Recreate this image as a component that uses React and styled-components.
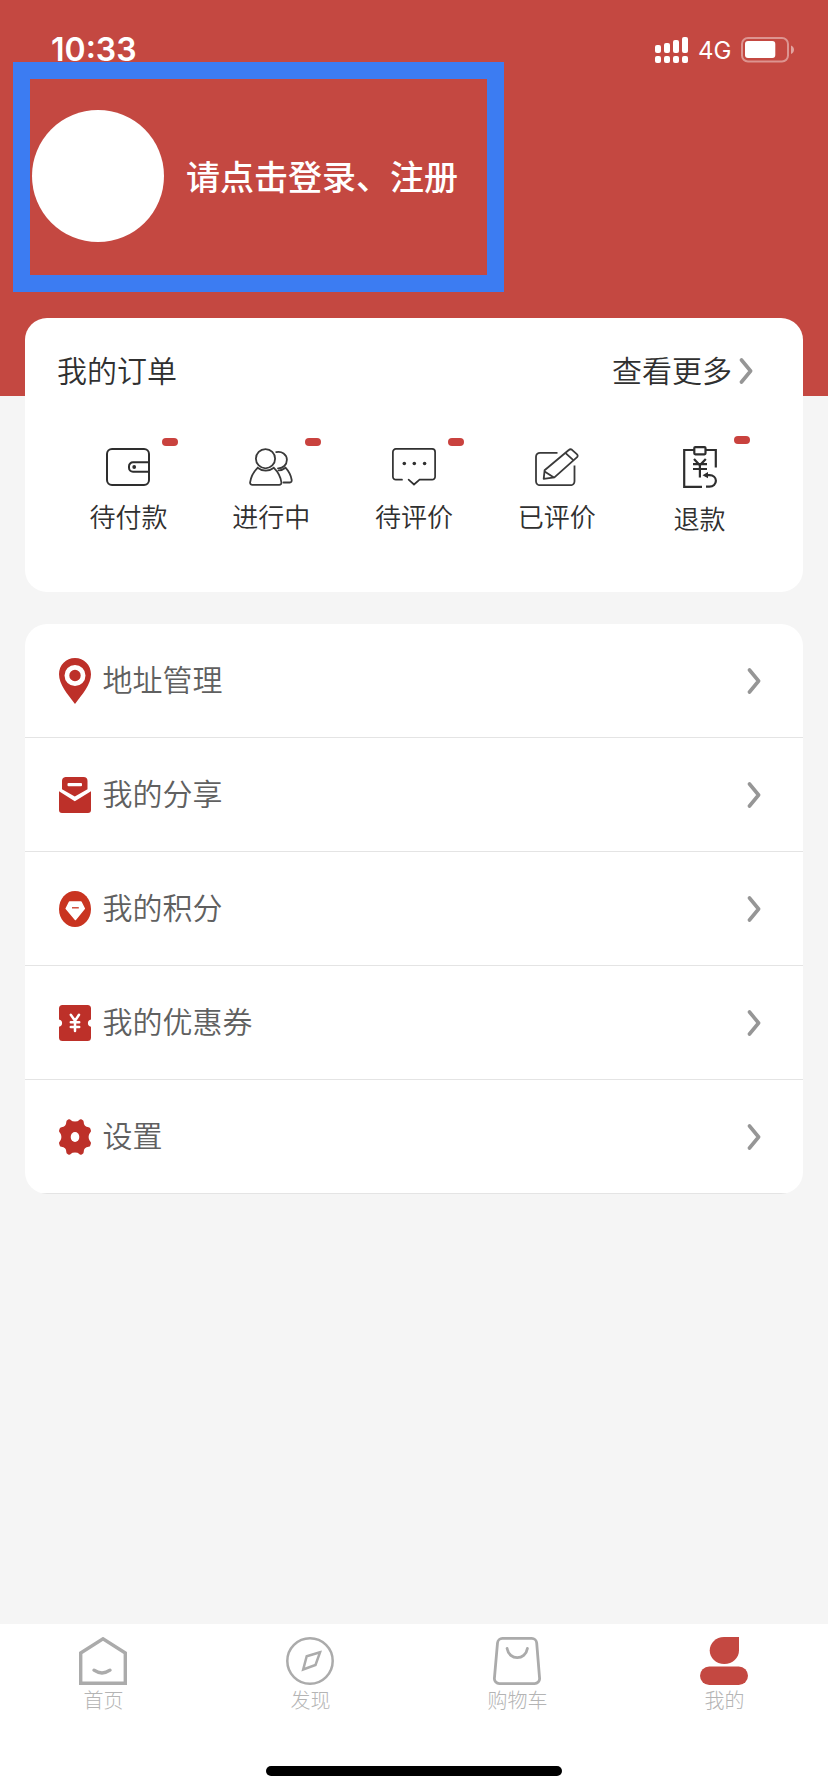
import React, { useState } from "react";
import styled, { createGlobalStyle } from "styled-components";

const WalletIcon = () => (
  <svg width="44" height="38" viewBox="0 0 44 38" fill="none" stroke="#2e2e2e" strokeWidth="2">
    <rect x="1" y="1" width="42" height="36" rx="5" />
    <path d="M43 14.3H27a4 4 0 0 0-4 4v1.400a4 4 0 0 0 4 4H43" />
    <circle cx="28.2" cy="19" r="1.9" fill="#2e2e2e" stroke="none" />
  </svg>
);

const PeopleIcon = () => (
  <svg width="44" height="38" viewBox="0 0 44 38" fill="none" stroke="#3a3a3a" strokeWidth="1.8" strokeLinecap="round">
    <circle cx="16.5" cy="10.7" r="9.6" />
    <path d="M8.6 19.8C4.300 24 1.800 29.500 1.100 34.300c-.2 1.500.8 2.500 2.300 2.500h26.800c1.500 0 2.400-1 2.200-2.500-.7-4.800-3.200-10.300-7.500-14.500-4.500 3.700-11.800 3.700-16.300 0z" />
    <path d="M27.200 4.100c5.500-1.300 10.700 2.300 10.700 7.700 0 5-4 8.700-8.900 8.500" />
    <path d="M29.500 22.300c2.600.3 4.700-.8 7-2.600 3.500 3.800 5.600 8.600 6.200 12.300.2 1.300-.5 2.500-1.800 2.500h-6.400" />
  </svg>
);

const CommentIcon = () => (
  <svg width="44" height="38" viewBox="0 0 44 38" fill="none" stroke="#303030" strokeWidth="1.7" strokeLinecap="round">
    <path d="M10 31.700H3.900a3 3 0 0 1-3-3V3.900a3 3 0 0 1 3-3h36.200a3 3 0 0 1 3 3v24.800a3 3 0 0 1-3 3H27.600L22 36.500l-5.400-4.800" />
    <g fill="#303030" stroke="none">
      <circle cx="12.300" cy="15.500" r="1.800" />
      <circle cx="22.300" cy="15.500" r="1.800" />
      <circle cx="32.600" cy="15.500" r="1.800" />
    </g>
  </svg>
);

const EditIcon = () => (
  <svg width="44" height="38" viewBox="0 0 44 38" fill="none" stroke="#3a3a3a" strokeWidth="1.800" strokeLinejoin="round">
    <path d="M22.500 4.800H5a4 4 0 0 0-4 4v24.400a4 4 0 0 0 4 4h30.500a4 4 0 0 0 4-4V17.500" />
    <path d="M9.600 22.300L33.800 2c1-.9 2.200-1 3.200-.2l4.800 4.300c1 .9 1.200 2 .3 3L19.400 29.400l-10.700 1.400z" />
    <path d="M30.600 5.200l7.700 7M9.600 23.500l9.300 6.100" />
  </svg>
);

const RefundIcon = () => (
  <svg width="34" height="42" viewBox="0 0 34 42" fill="none" stroke="#2e2e2e" strokeWidth="2.200">
    <path d="M11 4H1.200v36.800H19M22.500 4h10.300v17.500" />
    <rect x="11.300" y="1.100" width="11.200" height="7.200" rx="1" />
    <path d="M11 13l5.800 6.300L22.800 13M10 18.200h14M10 23h14M16.900 18.500v13" />
    <path d="M23 40.700h3.500c3.700 0 6.400-2.600 6.400-5.900s-2.700-5.700-6.400-5.700H22" />
    <path d="M25 25.900l-5.500 3.400L25 32.300z" fill="#2e2e2e" stroke="none" />
  </svg>
);

const PinIcon = () => (
  <svg width="32" height="46" viewBox="0 0 32 46" fill="none">
    <path d="M16 0C7 0 0 7.200 0 16.200 0 26.500 8.500 36 16 46c7.500-10 16-19.500 16-29.800C32 7.200 25 0 16 0z" fill="#bd3029" />
    <circle cx="16" cy="17.500" r="8.100" stroke="#fff" strokeWidth="4.800" />
  </svg>
);

const MailIcon = () => (
  <svg width="32" height="36" viewBox="0 0 32 36" fill="#bd3029">
    <path d="M6.500 0h18A4 4 0 0 1 28.500 4v8.300L15.800 19.500 3 12.300V4A4 4 0 0 1 6.500 0z" />
    <path d="M0 14.300l15.800 10L32 14.300V33a3 3 0 0 1-3 3H3a3 3 0 0 1-3-3z" />
    <rect x="8.500" y="6" width="14.500" height="3.200" rx="1" fill="#fff" />
  </svg>
);

const DiamondIcon = () => (
  <svg width="32" height="36" viewBox="0 0 32 36">
    <ellipse cx="16" cy="18" rx="16" ry="18" fill="#c93420" />
    <path d="M10.500 11h11.500L25.300 17.500 16.400 28.500 7.200 17.500z" fill="#fff" stroke="#fff" strokeWidth="1.500" strokeLinejoin="round" />
    <path d="M13 16.800h6.800" stroke="#c93420" strokeWidth="1.300" />
  </svg>
);

const CouponIcon = () => (
  <svg width="32" height="36" viewBox="0 0 32 36">
    <path
      d="M3.500 0h25A3.500 3.500 0 0 1 32 3.500V14.400a3.700 3.700 0 0 0 0 7.300V32.500a3.500 3.500 0 0 1-3.500 3.500h-25A3.500 3.500 0 0 1 0 32.500V21.700a3.700 3.700 0 0 0 0-7.300V3.500A3.500 3.500 0 0 1 3.500 0z"
      fill="#bd3029"
    />
    <path
      d="M11.800 9.800l4.200 6 4-6M11.800 17.300h8.400M11.800 21.900h8.400M16 16.500V26"
      fill="none"
      stroke="#fff"
      strokeWidth="2.500"
      strokeLinecap="round"
    />
  </svg>
);

const GearIcon = () => (
  <svg width="32" height="36" viewBox="0 0 32 36">
    <path
      d="M9.700.3Q11 0 12 1.200 13 2.600 16 2.600T20 1.200Q21 0 22.300.3L23.500.9Q24.700 1.500 24.700 3 24.700 5.500 26 6.800T29.500 8.300Q31 8.300 31.400 9.800L31.900 11.500Q32.200 13 31 13.800 29.600 15.500 29.600 18T31 22.200Q32.200 23 31.900 24.500L31.400 26.200Q31 27.700 29.500 27.700 27.300 27.900 26 29.200T24.700 33Q24.700 34.500 23.500 35.100L22.300 35.700Q21 36 20 34.800 19 33.400 16 33.400T12 34.800Q11 36 9.700 35.700L8.500 35.100Q7.300 34.500 7.300 33 7.300 30.500 6 29.200T2.500 27.700Q1 27.700.6 26.200L.1 24.500Q-.2 23 1 22.200 2.400 20.500 2.400 18T1 13.800Q-.2 13 .1 11.500L.6 9.800Q1 8.300 2.500 8.300 4.700 8.100 6 6.800T7.300 3Q7.300 1.500 8.500.9z"
      fill="#bd3029"
    />
    <ellipse cx="16" cy="18" rx="4.300" ry="5" fill="#fff" />
  </svg>
);

const ArrowIcon = () => (
  <svg width="14" height="28" viewBox="0 0 14 28" fill="none" stroke="#969696" strokeWidth="3.600" strokeLinecap="round" strokeLinejoin="round">
    <path d="M2.500 3L11.600 14 2.500 25" />
  </svg>
);

const HomeIcon = () => (
  <svg width="48" height="48" viewBox="0 0 48 48" fill="none" stroke="#ababab" strokeWidth="3.400">
    <path d="M1.700 46.300V16L24 1.800 46.300 16v30.300z" />
    <path d="M15 33.200c5 3.400 11 3.400 16 0" strokeLinecap="round" />
  </svg>
);

const CompassIcon = () => (
  <svg width="48" height="48" viewBox="0 0 48 48" fill="none" stroke="#ababab" strokeWidth="2.500">
    <circle cx="24" cy="24" r="22.700" />
    <path d="M34 15.300l-13.300 4-3.500 13.200 12.300-4.500z" />
  </svg>
);

const BagIcon = () => (
  <svg width="48" height="48" viewBox="0 0 48 48" fill="none" stroke="#ababab" strokeWidth="2.800">
    <path d="M9.500 1.400h29.200a5 5 0 0 1 5 4.600l2.900 35.300a5 5 0 0 1-5 5.300H6.400a5 5 0 0 1-5-5.300L4.500 6a5 5 0 0 1 5-4.600z" />
    <path d="M14.100 11.500c2 12.200 18.300 12.200 20.300 0" strokeLinecap="round" />
  </svg>
);

const MineIcon = () => (
  <svg width="48" height="48" viewBox="0 0 48 48" fill="#c44841">
    <path d="M24 0h15v13.500C39 21 32.500 27 24.300 27 16 27 9.700 21 9.700 13.500S16 0 24 0z" />
    <rect x="0" y="29.500" width="48" height="18.500" rx="9.250" />
  </svg>
);

const SignalIcon = () => (
  <svg width="33" height="26" viewBox="0 0 33 26" fill="#fff">
    <rect x="0" y="8" width="6" height="8" rx="2" />
    <rect x="9" y="6" width="6" height="10" rx="2" />
    <rect x="18" y="3" width="6" height="13" rx="2" />
    <rect x="27" y="0" width="6" height="16" rx="2" />
    <rect x="0" y="19" width="6" height="7" rx="2" />
    <rect x="9" y="19" width="6" height="7" rx="2" />
    <rect x="18" y="19" width="6" height="7" rx="2" />
    <rect x="27" y="19" width="6" height="7" rx="2" />
  </svg>
);

const BatteryIcon = () => (
  <svg width="54" height="26" viewBox="0 0 54 26">
    <rect x="1" y="1" width="46" height="23.500" rx="6" fill="none" stroke="#fff" strokeOpacity=".42" strokeWidth="2" />
    <rect x="4" y="4" width="30.300" height="17" rx="3" fill="#fff" />
    <path d="M50 8.500c2 .8 3 2.400 3 4.300s-1 3.500-3 4.300z" fill="#fff" fillOpacity=".5" />
  </svg>
);

const orderItems = [
  { id: 1, title: "待付款", icon: <WalletIcon />, badge: true },
  { id: 2, title: "进行中", icon: <PeopleIcon />, badge: true },
  { id: 3, title: "待评价", icon: <CommentIcon />, badge: true },
  { id: 4, title: "已评价", icon: <EditIcon />, badge: false },
  { id: 5, title: "退款", icon: <RefundIcon />, badge: true, tall: true },
];

const menuItems = [
  { id: 1, title: "地址管理", icon: <PinIcon /> },
  { id: 2, title: "我的分享", icon: <MailIcon /> },
  { id: 3, title: "我的积分", icon: <DiamondIcon /> },
  { id: 4, title: "我的优惠券", icon: <CouponIcon /> },
  { id: 5, title: "设置", icon: <GearIcon /> },
];

const tabItems = [
  { id: "home", title: "首页", icon: <HomeIcon /> },
  { id: "find", title: "发现", icon: <CompassIcon /> },
  { id: "cart", title: "购物车", icon: <BagIcon /> },
  { id: "mine", title: "我的", icon: <MineIcon /> },
];

const App = () => {
  const [, setActiveTab] = useState("mine");

  return (
    <>
      <GlobalStyle />
      <StyledScreen>
        <StyledHeader>
          <StyledStatusBar>
            <StyledTime>10:33</StyledTime>
            <StyledStatusIcons>
              <SignalIcon />
              <StyledNetwork>4G</StyledNetwork>
              <BatteryIcon />
            </StyledStatusIcons>
          </StyledStatusBar>
          <StyledProfile>
            <StyledAvatar />
            <StyledLogin>请点击登录、注册</StyledLogin>
          </StyledProfile>
          <StyledHighlight />
        </StyledHeader>

        <StyledOrders>
          <StyledOrdersHead>
            <StyledHeadText>我的订单</StyledHeadText>
            <StyledMore>
              <StyledHeadText>查看更多</StyledHeadText>
              <ArrowIcon />
            </StyledMore>
          </StyledOrdersHead>
          <StyledOrdersList>
            {orderItems.map((item) => (
              <StyledOrder key={item.id} $tall={item.tall}>
                {item.icon}
                <span>{item.title}</span>
                {item.badge && <StyledBadge $tall={item.tall} />}
              </StyledOrder>
            ))}
          </StyledOrdersList>
        </StyledOrders>

        <StyledMenu>
          {menuItems.map((item) => (
            <StyledMenuRow key={item.id}>
              {item.icon}
              <StyledMenuTitle>{item.title}</StyledMenuTitle>
              <ArrowIcon />
            </StyledMenuRow>
          ))}
        </StyledMenu>

        <StyledTabBar>
          <StyledTabs>
            {tabItems.map((tab) => (
              <StyledTab key={tab.id} onClick={() => setActiveTab(tab.id)}>
                {tab.icon}
                <span>{tab.title}</span>
              </StyledTab>
            ))}
          </StyledTabs>
          <StyledHomeIndicator />
        </StyledTabBar>
      </StyledScreen>
    </>
  );
};

const GlobalStyle = createGlobalStyle`
  * {
    box-sizing: border-box;
  }
  body {
    margin: 0;
    font-family: "Noto Sans CJK SC", sans-serif;
    font-weight: 350;
    background: #f5f5f5;
  }
  svg {
    display: block;
    flex-shrink: 0;
  }
`;
const StyledScreen = styled.div`
  width: 828px;
  height: 1792px;
  display: flex;
  flex-direction: column;
  background: #f5f5f5;
  overflow: hidden;
`;
const StyledHeader = styled.header`
  position: relative;
  flex-shrink: 0;
  height: 396px;
  background: #c44841;
  color: #fff;
`;
const StyledStatusBar = styled.div`
  height: 100px;
  padding: 0 33px 0 51px;
  display: flex;
  justify-content: space-between;
  font-family: Inter, sans-serif;
`;
const StyledTime = styled.span`
  padding-top: 30px;
  font-size: 32px;
  font-weight: 600;
  line-height: 40px;
`;
const StyledStatusIcons = styled.div`
  height: 26px;
  margin-top: 37px;
  display: flex;
  align-items: center;
`;
const StyledNetwork = styled.span`
  width: 53px;
  padding: 2px 0 0 10px;
  font-size: 24px;
  font-weight: 400;
  line-height: 26px;
`;
const StyledProfile = styled.div`
  padding: 10px 32px 0;
  display: flex;
  align-items: center;
  gap: 22px;
`;
const StyledAvatar = styled.div`
  width: 132px;
  height: 132px;
  border-radius: 50%;
  background: #fff;
`;
const StyledLogin = styled.span`
  font-size: 34px;
  font-weight: 500;
  line-height: 48px;
`;
const StyledHighlight = styled.div`
  position: absolute;
  left: 13px;
  top: 62px;
  width: 491px;
  height: 230px;
  border: 17px solid #3c7cf2;
`;
const StyledOrders = styled.section`
  position: relative;
  flex-shrink: 0;
  height: 274px;
  margin: -78px 25px 0;
  border-radius: 22px;
  background: #fff;
  color: #303030;
`;
const StyledOrdersHead = styled.div`
  height: 106px;
  padding: 0 50px 0 32px;
  display: flex;
  align-items: center;
  justify-content: space-between;
`;
const StyledHeadText = styled.span`
  padding-bottom: 4px;
  font-size: 30px;
  line-height: 44px;
`;
const StyledMore = styled.div`
  display: flex;
  align-items: center;
  gap: 7px;
`;
const StyledOrdersList = styled.div`
  padding: 0 32px;
  display: grid;
  grid-template-columns: repeat(5, 1fr);
`;
const StyledOrder = styled.div`
  position: relative;
  padding-top: ${(props) => (props.$tall ? "22px" : "24px")};
  display: flex;
  flex-direction: column;
  align-items: center;
  gap: 11px;
  font-size: 26px;
  line-height: 38px;
`;
const StyledBadge = styled.i`
  position: absolute;
  left: calc(50% + 34px);
  top: ${(props) => (props.$tall ? "12px" : "14px")};
  width: 16px;
  height: 8px;
  border-radius: 4px;
  background: #c9423e;
`;
const StyledMenu = styled.section`
  flex-shrink: 0;
  margin: 32px 25px 0;
  border-radius: 22px;
  background: #fff;
  overflow: hidden;
`;
const StyledMenuRow = styled.div`
  height: 114px;
  padding: 0 42px 0 34px;
  display: flex;
  align-items: center;
  gap: 11px;
  border-bottom: 1px solid #e4e4e4;
`;
const StyledMenuTitle = styled.span`
  flex: 1;
  padding: 0 0 6px 0.5px;
  font-size: 30px;
  line-height: 44px;
  color: #606060;
`;
const StyledTabBar = styled.nav`
  height: 168px;
  margin-top: auto;
  display: flex;
  flex-direction: column;
  align-items: center;
  justify-content: space-between;
  padding-bottom: 16px;
  background: #fff;
`;
const StyledTabs = styled.div`
  width: 100%;
  padding-top: 13px;
  display: grid;
  grid-template-columns: repeat(4, 1fr);
`;
const StyledTab = styled.div`
  display: flex;
  flex-direction: column;
  align-items: center;
  font-size: 20px;
  font-weight: 300;
  line-height: 30px;
  color: #b4b4b4;
  cursor: pointer;

  svg {
    margin-right: 1px;
  }
`;
const StyledHomeIndicator = styled.div`
  width: 296px;
  height: 10px;
  border-radius: 5px;
  background: #000;
`;
export default App;
